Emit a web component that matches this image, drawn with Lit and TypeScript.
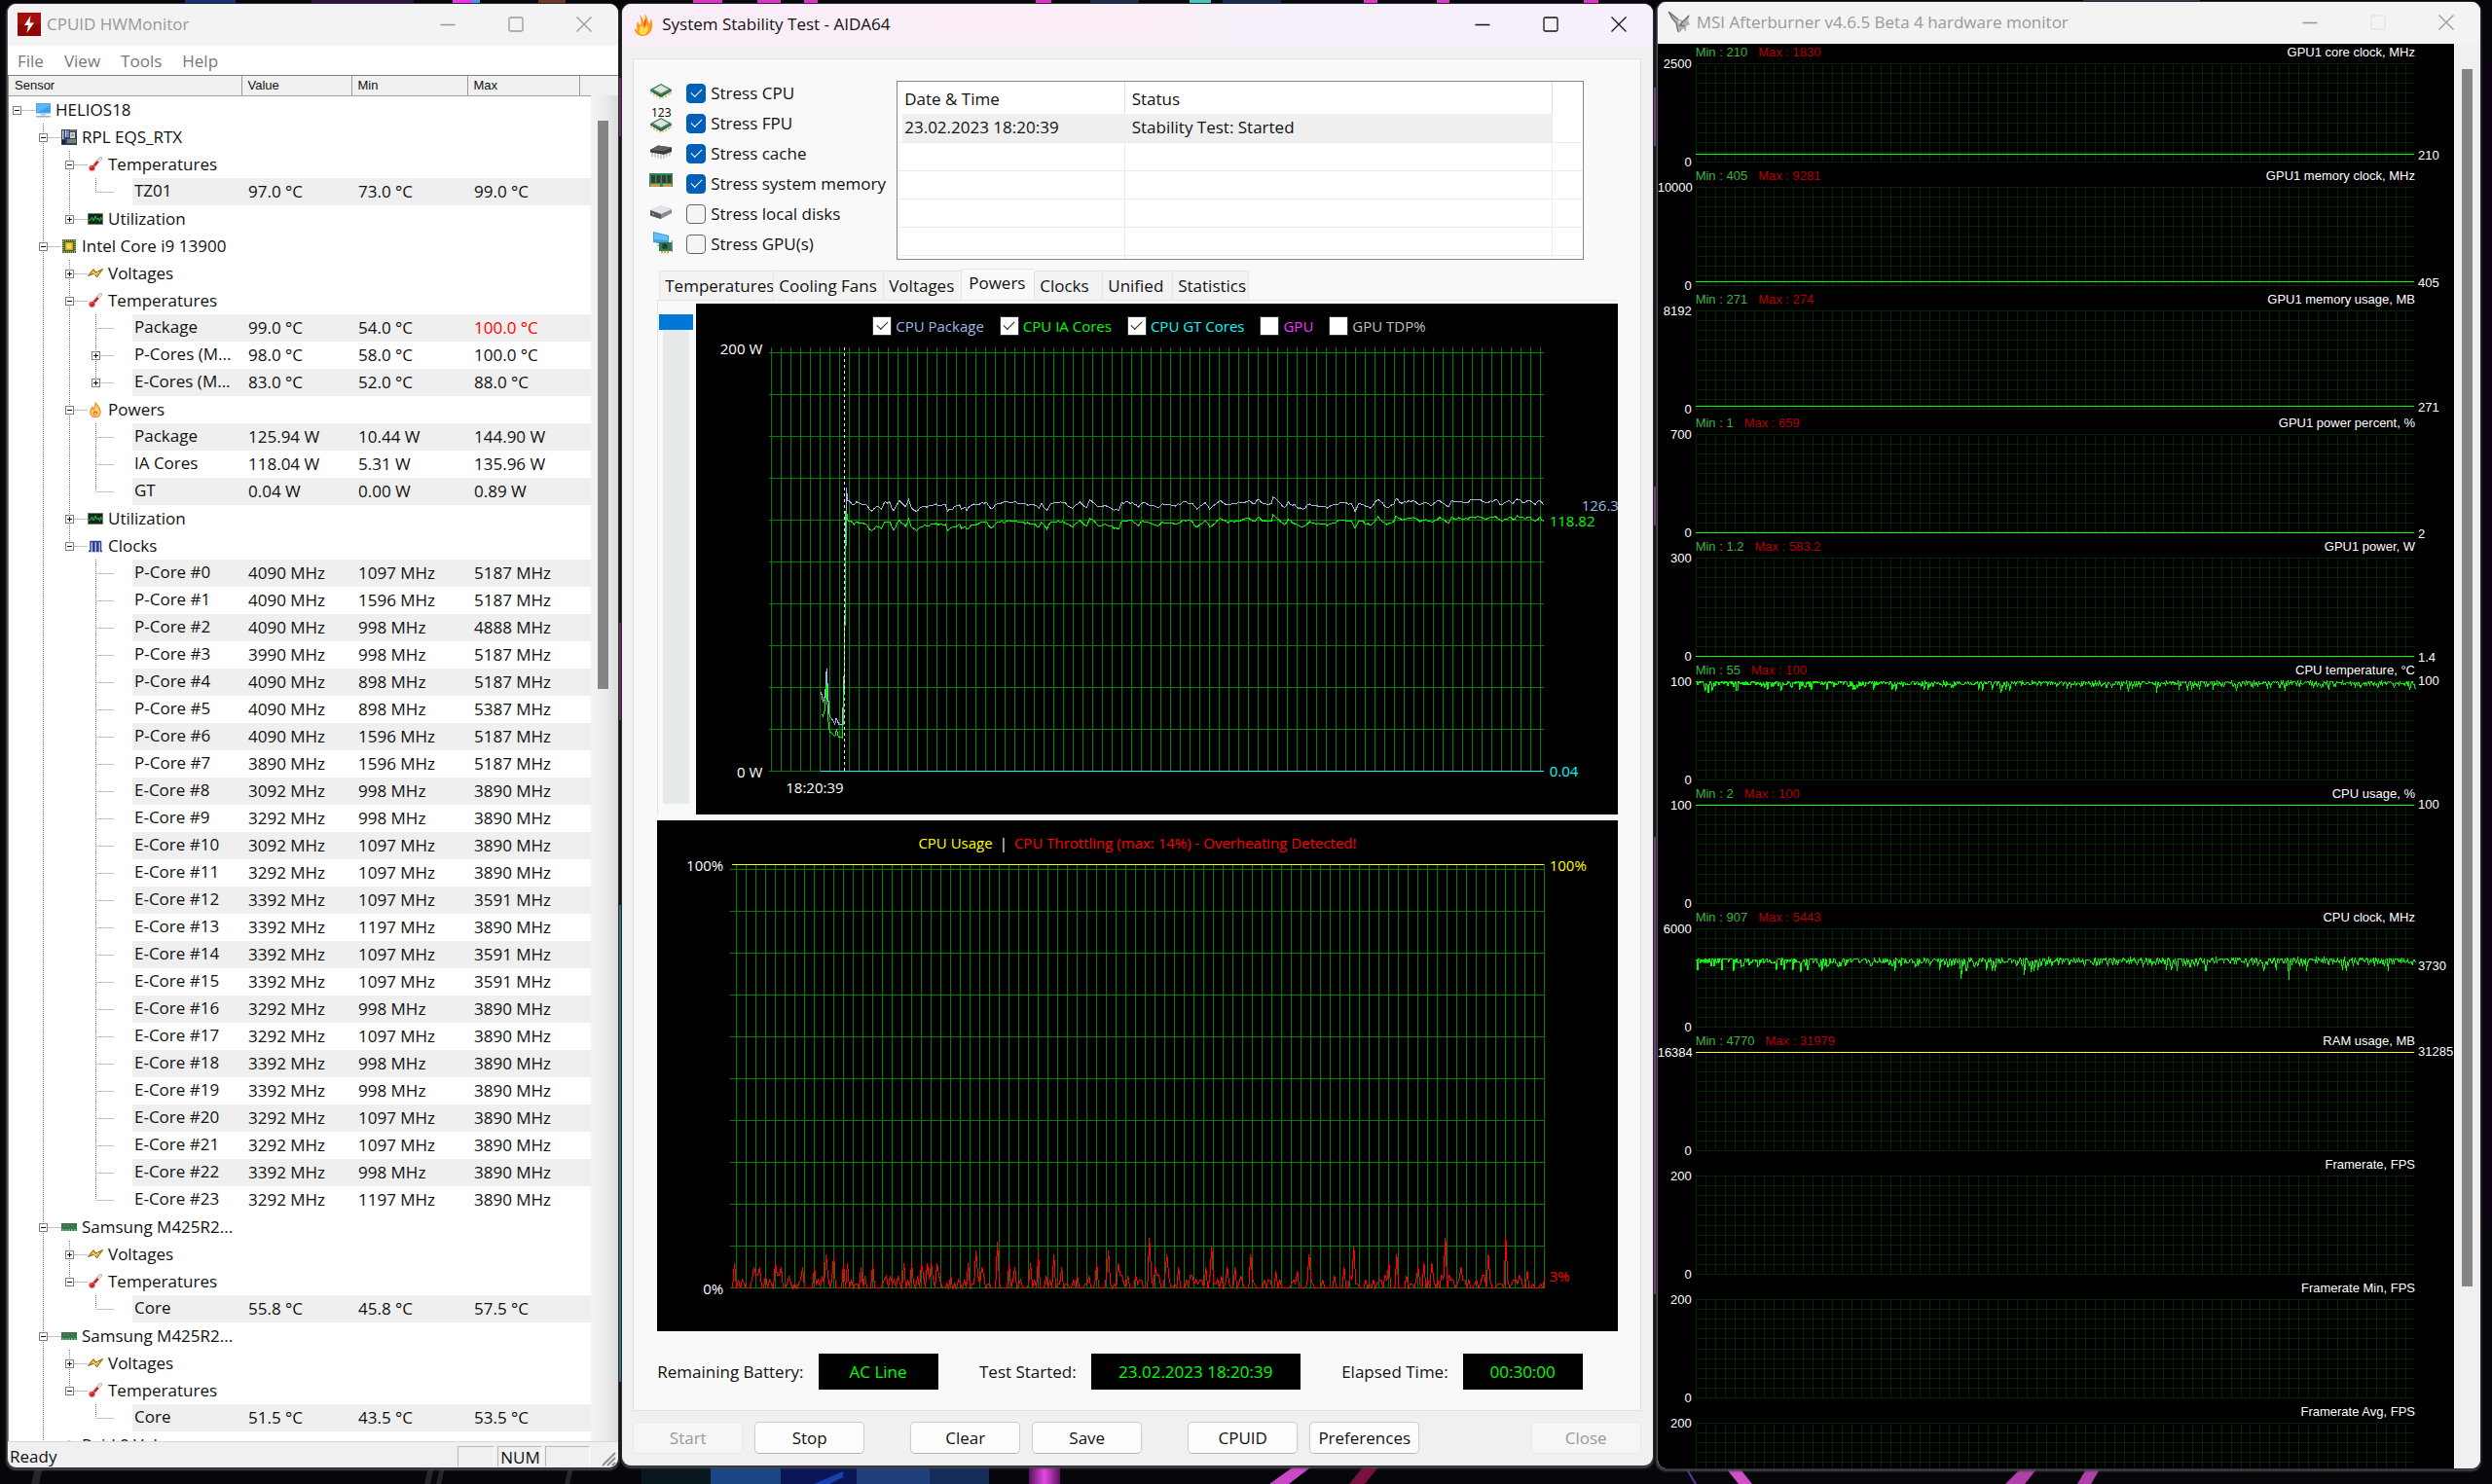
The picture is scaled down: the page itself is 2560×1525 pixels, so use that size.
import { LitElement, html, svg, css, nothing, TemplateResult } from "lit";
import { customElement, property } from "lit/decorators.js";
import { classMap } from "lit/directives/class-map.js";
import { styleMap } from "lit/directives/style-map.js";

/* ---------- shared helpers ---------- */

type Pt = [number, number];

/** Small deterministic generator so that every render draws the same trace. */
function makeRandom(seed: number): () => number {
  let s = seed;
  return () => {
    s = (s * 1664525 + 1013904223) % 4294967296;
    return s / 4294967296;
  };
}

const toPath = (pts: Pt[]) => pts.map(([x, y], i) => `${i ? "L" : "M"}${x.toFixed(1)} ${y.toFixed(1)}`).join("");

function gridPath(w: number, h: number, x0: number, dx: number, y0: number, dy: number): string {
  let d = "";
  for (let x = x0; x < w; x += dx) d += `M${x} 0V${h}`;
  for (let y = y0; y <= h; y += dy) d += `M0 ${Math.floor(y) + 0.5}H${w}`;
  return d;
}

const base = css`
  * { box-sizing: border-box; }
  :host { display: flex; flex-direction: column; min-width: 0; min-height: 0; font: 17px/24px "Open Sans", "Noto Sans", sans-serif; color: #111; }
  button { font: inherit; color: inherit; }
  svg { display: block; }
  .plot { width: 100%; height: 100%; overflow: visible; }
  .plot path { fill: none; vector-effect: non-scaling-stroke; stroke-width: 1; }
`;

/* ---------- icons ---------- */

const chipArt = svg`
  <path d="M1 9 12 14.500 23 9V10.500L12 17 1 10.500Z" fill="#1f5a3c"/>
  <path d="M2 11.500v2M5 13v2.500M8 14.500v2.500M11 16v2.500M14 16v2M17 14.500v2.500M20 12.500v2.500M22 11.500v2" stroke="#c9a24a" stroke-width="1.200"/>
  <path d="M12 3 23 9 12 14.500 1 9Z" fill="#2f7a52"/>
  <path d="M12 4.200 20 8.700 12 13 4 8.700Z" fill="#dfe3e0"/>`;

const icons: Record<string, TemplateResult> = {
  pc: svg`<rect x="1" y="1" width="15" height="10.500" rx=".5" fill="#4da6e8"/><rect x="2" y="2" width="13" height="8.500" fill="#58b9f5"/><path d="M2 10.500 15 4v6.500Z" fill="#3d9fe6"/><path d="M6 12h5v1.500H6Z" fill="#a9c6d8"/><path d="M1 14h15v1.500H1Z" fill="#8fb4c9"/>`,
  board: svg`<rect width="16" height="16" fill="#2c3f6e"/><path d="M1 1h1.500v9H1zM4 1h1.500v7H4zM6.500 1h1v7h-1z" fill="#c6cfe4"/><rect x="9" y="3" width="5" height="6" fill="#d8d2bd"/><rect x="10.500" y="4.500" width="2" height="2.500" fill="#8d8a77"/><path d="M6 11h9M6 13h9" stroke="#d2c05a" stroke-width="1.200"/><rect x="1" y="11" width="3" height="4" fill="#17213f"/><path d="M9 1h6" stroke="#b6a65c"/>`,
  temp: svg`<path d="M7 9 13.500 1.500" stroke="#b9bcc0" stroke-width="3.600" stroke-linecap="round"/><path d="M7 9 13.500 1.500" stroke="#e9eaec" stroke-width="1.600" stroke-linecap="round"/><path d="M5 11.500 10 5.500" stroke="#d3141a" stroke-width="2.200" stroke-linecap="round"/><circle cx="4.500" cy="12" r="3.600" fill="#c9cbd0"/><circle cx="4.500" cy="11.600" r="2.700" fill="#e0161c"/><circle cx="3.700" cy="10.800" r=".8" fill="#ff9a9a"/>`,
  util: svg`<rect y="2" width="16" height="12" fill="#8b8f8d"/><rect x=".8" y="2.800" width="14.400" height="10.400" fill="#10281a"/><path d="M1 10 3 9 4.500 6 6 10 8 5 9.500 9 11 7 12.500 10.500 13.500 6 15 9" fill="none" stroke="#2fb84c"/>`,
  cpu: svg`<rect x="1" y="1" width="14" height="14" fill="#2c6b3a"/><rect x="2" y="2" width="12" height="12" fill="none" stroke="#d9b73c" stroke-dasharray="1 1" stroke-width="1.400"/><rect x="4" y="4" width="8" height="8" fill="#e0a21a"/><rect x="5.500" y="5.500" width="5" height="5" fill="#ffd74f"/>`,
  volt: svg`<path d="M.5 10.500 6 3.500 8.500 7 15.500 3.500 9.500 12 7 8Z" fill="#f0b81c" stroke="#6d4a10" stroke-width=".9" stroke-linejoin="round"/><path d="M5 6 8 9 11 6.500" fill="none" stroke="#ffe58a"/>`,
  fire: svg`<path d="M8 .5C9 3 13.500 6 13 11c-.3 3-2.500 4.700-5 4.700S3 14 2.800 11C2.600 8.500 4 7.500 4.500 5.500 5.500 6.500 6 7.500 6.200 8 7.500 6 8.300 3.500 8 .5Z" fill="#ffcf7a" stroke="#f08a1c" stroke-width="1.200"/><circle cx="8" cy="11.500" r="2.200" fill="#e86f10"/><circle cx="8" cy="12" r=".9" fill="#fff0c8"/>`,
  clock: svg`<path d="M1 13.500H3V3.500H5.500V13.500H7V3.500H9.500V13.500H11V3.500H13.500V13.500H15" fill="none" stroke="#2b3fa0" stroke-width="1.500"/>`,
  ram: svg`<rect y="4" width="16" height="8" fill="#2a7a4a"/><path d="M1.500 5.500h3v3h-3zM5.500 5.500h3v3h-3zM9.500 5.500h3v3h-3z" fill="#56705f"/><path d="M1 11h14" stroke="#c7d8a8" stroke-dasharray="2 1" stroke-width="1.200"/>`,
  raid: svg`<path d="M1 6 8 3l7 3v5l-7 3-7-3Z" fill="#b9bcc0"/>`,
};

const icon = (name: string) => html`<svg class="icon" width="16" height="16" viewBox="0 0 16 16" aria-hidden="true">${icons[name]}</svg>`;

const stressIcons: Record<string, TemplateResult> = {
  chip: chipArt,
  fpu: svg`<text x="2" y="6">123</text><g transform="translate(0 4)">${chipArt}</g>`,
  cache: svg`<path d="M1 9 9 4.500 23 6.500V11L15 14 1 11.500Z" fill="#3b3b3d"/><path d="M1 9 9 4.500 23 6.500 15 10.500Z" fill="#5e5f62"/><path d="M3 12v4M6 12.500v4M9 13v4.500M12 13.500v5M15 13.500v4M18 12.500v3.500M21 11.500v4" stroke="#a7a9ad" stroke-width="1.100"/>`,
  mem: svg`<rect y="2" width="24" height="14" fill="#2f8a58"/><path d="M2 4h4v8H2zM7.500 4h4v8h-4zM13 4h4v8h-4zM18.500 4h4v8h-4z" fill="#333d38"/><path d="M1 14.500h10M14 14.500h9" stroke="#c99a4a" stroke-width="3"/>`,
  disk: svg`<path d="M1 9 12 4.500 23 8v4L12 18 1 14.500Z" fill="#8a8b8e"/><path d="M1 9 12 4.500 23 8 12 13Z" fill="#e4e5e8"/><path d="M1 9 12 13v5L1 14.500Z" fill="#55575a"/><circle cx="4" cy="13" r="1" fill="#4fd06a"/>`,
  gpu: svg`<path d="M4 0 20 4V14L4 11Z" fill="#3d9fe6"/><path d="M5 1.500 19 5v4L5 8Z" fill="#6cc0f7"/><path d="M8 14 18 16" stroke="#9ec4de" stroke-width="2"/><rect x="10" y="11" width="13" height="9" fill="#2f7a52"/><rect x="13.500" y="12.500" width="5" height="5" fill="#1f3a2c"/><path d="M12 21h9" stroke="#d8a83a" stroke-width="2.400" stroke-dasharray="2 1"/><path d="M23.500 9v12" stroke="#8a8b8e"/>`,
};

/* ---------- window frame ---------- */

@customElement("window-frame")
export class WindowFrame extends LitElement {
  @property() heading = "";
  @property({ type: Boolean, reflect: true }) active = false;
  @property({ type: Boolean }) fixed = false;
  static styles = [base, css`
    :host { flex: 1; border: 1px solid #55555a; border-width: 0 0 0 1px; border-radius: 9px; overflow: hidden; background: #f0f0f0; box-shadow: 0 0 0 1px #2c2c30, 0 2px 2px 1px #454549; }
    .bar { display: flex; align-items: center; height: 43px; padding: 0 0 2px 10px; background: #f3f3f3; color: #999; flex: none; }
    :host([active]) { border-left-color: #f0f0f0; }
    :host([active]) .bar { background: linear-gradient(90deg, #f8eef8, #fbedf6 50%, #f5f0f9 60%); color: #111; }
    .name { flex: 1; margin: 0; padding-left: 6px; font-size: 17px; font-weight: 400; white-space: nowrap; }
    .ctl { width: 70px; height: 41px; padding: 0; border: 0; background: none; display: grid; place-items: center; }
    .ctl path { fill: none; stroke: currentColor; stroke-width: 1.300; }
    .off { color: #e3e3e3; }
  `];
  render() {
    return html`
      <header class="bar">
        <slot name="icon"></slot>
        <h1 class="name">${this.heading}</h1>
        <button class="ctl" aria-label="Minimize"><svg width="16" height="16"><path d="M.5 8.500H15.500"/></svg></button>
        <button class=${classMap({ ctl: true, off: this.fixed })} aria-label="Maximize" ?disabled=${this.fixed}><svg width="16" height="16"><path d="M2.500 1H13.500Q15 1 15 2.500V13.500Q15 15 13.500 15H2.500Q1 15 1 13.500V2.500Q1 1 2.500 1Z"/></svg></button>
        <button class="ctl" aria-label="Close window"><svg width="16" height="16"><path d="M.5.5 15.500 15.500M15.500.5.5 15.500"/></svg></button>
      </header>
      <slot></slot>`;
  }
}

/* ---------- CPUID HWMonitor ---------- */

interface Node { label: string; level: number; icon?: string; box?: "+" | "-"; values?: string[]; hot?: boolean; shade?: boolean; }

const node = (level: number, label: string, ic: string, box: "+" | "-" = "-"): Node => ({ level, label, icon: ic, box });
const leaves = (rows: string[]): Node[] =>
  rows.map((r, i) => {
    const [label, ...values] = r.split("|");
    return { level: 3, label, values, shade: i % 2 === 0, hot: false };
  });
const clocks = [
  "4090|1097|5187", "4090|1596|5187", "4090|998|4888", "3990|998|5187", "4090|898|5187", "4090|898|5387", "4090|1596|5187", "3890|1596|5187",
  "3092|998|3890", "3292|998|3890", "3092|1097|3890", "3292|1097|3890", "3392|1097|3591", "3392|1197|3890", "3392|1097|3591", "3392|1097|3591",
  "3292|998|3890", "3292|1097|3890", "3392|998|3890", "3392|998|3890", "3292|1097|3890", "3292|1097|3890", "3392|998|3890", "3292|1197|3890",
].map((c, i) => `${i < 8 ? "P" : "E"}-Core #${i}|${c.split("|").map((v) => v + " MHz").join("|")}`);

const cpuTemps = leaves(["Package|99.0 °C|54.0 °C|100.0 °C", "P-Cores (M...|98.0 °C|58.0 °C|100.0 °C", "E-Cores (M...|83.0 °C|52.0 °C|88.0 °C"]);
cpuTemps[0].hot = true;
cpuTemps[1].box = "+";
cpuTemps[2].box = "+";

const tree: Node[] = [
  node(0, "HELIOS18", "pc"),
  node(1, "RPL EQS_RTX", "board"),
  node(2, "Temperatures", "temp"),
  ...leaves(["TZ01|97.0 °C|73.0 °C|99.0 °C"]),
  node(2, "Utilization", "util", "+"),
  node(1, "Intel Core i9 13900", "cpu"),
  node(2, "Voltages", "volt", "+"),
  node(2, "Temperatures", "temp"),
  ...cpuTemps,
  node(2, "Powers", "fire"),
  ...leaves(["Package|125.94 W|10.44 W|144.90 W", "IA Cores|118.04 W|5.31 W|135.96 W", "GT|0.04 W|0.00 W|0.89 W"]),
  node(2, "Utilization", "util", "+"),
  node(2, "Clocks", "clock"),
  ...leaves(clocks),
  node(1, "Samsung M425R2...", "ram"),
  node(2, "Voltages", "volt", "+"),
  node(2, "Temperatures", "temp"),
  ...leaves(["Core|55.8 °C|45.8 °C|57.5 °C"]),
  node(1, "Samsung M425R2...", "ram"),
  node(2, "Voltages", "volt", "+"),
  node(2, "Temperatures", "temp"),
  ...leaves(["Core|51.5 °C|43.5 °C|53.5 °C"]),
  node(1, "Raid 0 Volu...", "raid"),
];

/** True when a later row continues the branch at the given level. */
function continues(index: number, level: number): boolean {
  for (let i = index + 1; i < tree.length; i++) {
    if (tree[i].level < level) return false;
    if (tree[i].level === level) return true;
  }
  return level === 1;
}

function guides(index: number) {
  const n = tree[index];
  const leaf = !n.icon;
  const width = leaf ? 127 : 27 + 27 * n.level;
  const cx = 8.5 + 27 * n.level;
  let d = `M${cx} 14.500H${leaf ? 108 : width}`;
  for (let l = 1; l <= n.level; l++) {
    const x = 8.5 + 27 * l;
    if (continues(index, l)) d += `M${x} 0V28`;
    else if (l === n.level) d += `M${x} 0V14`;
  }
  return html`<svg class="guide" width=${width} height="28" aria-hidden="true">
    <path class="dots" d=${d}></path>
    ${n.box ? svg`<rect x=${cx - 4} y="10.500" width="8" height="8" fill="#fff" stroke="#808080"/>
      <path d=${`M${cx - 2.5} 14.500h5` + (n.box === "+" ? `M${cx} 12v5` : "")} stroke="#111"/>` : nothing}
  </svg>`;
}

@customElement("hw-monitor")
export class HwMonitor extends LitElement {
  static styles = [base, css`
    .menu { display: flex; gap: 21px; height: 30px; padding: 2px 0 0 10px; background: #fff; color: #777; font-size: 17px; flex: none; }
    .menu button { border: 0; padding: 0; background: none; }
    .list { position: relative; flex: 1; min-height: 0; overflow: hidden; background: #fff; border: 1px solid #828282; border-width: 1px 0 0 1px; }
    table { width: 100%; table-layout: fixed; border-collapse: collapse; }
    .c1 { width: 239px; } .c2 { width: 113px; } .c3 { width: 119px; } .c4 { width: 115px; }
    th { height: 20px; padding: 0 0 0 6px; text-align: left; font: 13px/18px "Liberation Sans", Arial, sans-serif; background: #f0f0f0; border-right: 1px solid #999; border-bottom: 1px solid #a0a0a0; }
    th:last-child { border-right: 0; }
    td { height: 28px; padding: 0 0 0 7px; line-height: 26px; white-space: nowrap; }
    td.s { padding: 0; }
    .shade td:not(.s), .shade .leaf { background: #efefef; }
    .cell { display: flex; align-items: center; height: 28px; }
    .guide { flex: none; }
    .dots { stroke: #808080; stroke-dasharray: 1 1; fill: none; }
    .icon { flex: none; margin-right: 5px; }
    .leaf { flex: 1; height: 28px; padding-left: 2px; }
    .hot { color: #f00; }
    .scroll { position: absolute; top: 20px; right: 0; bottom: 0; width: 28px; background: linear-gradient(90deg, #f3f3f3, #ededed 50%, #dadada); display: flex; flex-direction: column; padding: 26px 11px 0 7px; }
    .thumb { width: 11px; height: 43%; background: #858585; }
    .status { display: flex; align-items: stretch; gap: 3px; height: 27px; padding: 4px 2px 1px 2px; border-top: 1px solid #d8d8d8; flex: none; }
    .ready { flex: 1; line-height: 22px; }
    .box { width: 38px; line-height: 22px; border: 1px solid #b8b8b8; border-right-color: #fff; border-bottom: 0; padding-left: 2px; }
    .wide { width: 46px; }
    .grip { align-self: flex-end; margin-left: 8px; }
  `];
  render() {
    return html`
      <nav class="menu">${["File", "View", "Tools", "Help"].map((m) => html`<button>${m}</button>`)}</nav>
      <div class="list">
        <table>
          <colgroup><col class="c1"><col class="c2"><col class="c3"><col class="c4"><col></colgroup>
          <thead><tr><th>Sensor</th><th>Value</th><th>Min</th><th>Max</th><th></th></tr></thead>
          <tbody>
            ${tree.map((n, i) => html`<tr class=${n.shade ? "shade" : ""}>
              <td class="s"><div class="cell">${guides(i)}${n.icon ? html`${icon(n.icon)}${n.label}` : html`<span class="leaf">${n.label}</span>`}</div></td>
              ${[0, 1, 2].map((k) => html`<td class=${n.hot && k === 2 ? "hot" : ""}>${n.values?.[k] ?? ""}</td>`)}
              <td></td>
            </tr>`)}
          </tbody>
        </table>
        <div class="scroll"><div class="thumb"></div></div>
      </div>
      <footer class="status">
        <span class="ready">Ready</span>
        <span class="box"></span><span class="box wide">NUM</span><span class="box wide"></span>
        <svg class="grip" width="16" height="16" aria-hidden="true"><path d="M2 15 15 2M7 15 15 7M12 15 15 12" stroke="#909090" stroke-width="2"></path></svg>
      </footer>`;
  }
}

/* ---------- AIDA64 System Stability Test ---------- */

const early: Pt[] = [[452, 1150], [457, 1180], [462, 1160], [466, 1082], [470, 1170], [473, 1220], [480, 1230], [487, 1243], [490, 1225], [497, 1245], [505, 1245], [508, 1178], [511, 1040], [513, 800], [515, 563]];
const steady: Pt[] = [
  [519, 600], [535, 612], [541, 604], [561, 610], [580, 630], [591, 618], [604, 625], [613, 604], [624, 604], [634, 629], [649, 600], [665, 618], [672, 597], [679, 620], [692, 631], [701, 620],
  [735, 613], [765, 613], [770, 630], [800, 612], [805, 625], [815, 620], [818, 628], [830, 614], [862, 608], [868, 606], [880, 624], [890, 612], [918, 604], [960, 608], [990, 614], [1000, 622],
  [1006, 608], [1020, 628], [1030, 608], [1060, 606], [1085, 622], [1103, 604], [1120, 620], [1128, 598], [1148, 618], [1165, 614], [1201, 629], [1208, 606], [1235, 605], [1250, 620], [1262, 606],
  [1300, 620], [1310, 610], [1323, 612], [1343, 616], [1363, 604], [1385, 608], [1398, 625], [1418, 606], [1430, 625], [1456, 600], [1475, 612], [1508, 606], [1528, 600], [1543, 610], [1553, 596],
  [1563, 608], [1585, 608], [1589, 590], [1603, 604], [1618, 620], [1627, 604], [1648, 618], [1663, 625], [1681, 610], [1703, 616], [1726, 622], [1763, 606], [1785, 608], [1795, 631], [1805, 608],
  [1833, 622], [1853, 597], [1875, 620], [1893, 610], [1898, 595], [1913, 608], [1941, 600], [1958, 612], [1973, 606], [1988, 614], [2008, 600], [2030, 618], [2038, 600], [2068, 606], [2103, 597],
  [2123, 606], [2148, 598], [2165, 612], [2183, 600], [2193, 608], [2203, 596], [2223, 606], [2235, 600], [2248, 612], [2260, 600], [2270, 612],
];
const px = ([x, y]: Pt): Pt => [x / 2.45 - 131, y / 2.8 - 57];

function densify(keys: Pt[], shift: (t: number) => number, seed: number): Pt[] {
  const rnd = makeRandom(seed);
  const out: Pt[] = [];
  const last = keys[keys.length - 1][0];
  keys.forEach((p, i) => {
    const q = keys[i + 1];
    const steps = q ? Math.max(1, Math.round((q[0] - p[0]) / 6)) : 1;
    for (let k = 0; k < steps; k++) {
      const f = k / steps;
      const x = q ? p[0] + (q[0] - p[0]) * f : p[0];
      const y = q ? p[1] + (q[1] - p[1]) * f : p[1];
      out.push(px([x, y + shift(x / last) + (k ? (rnd() - 0.5) * 7 : 0)]));
    }
  });
  return out;
}
const packageTrace = toPath([...early.map(px), ...densify(steady, () => 0, 7)]);
const coreTrace = toPath([
  ...([[453, 1215], [457, 1220], [461, 1205], [466, 1125], [469, 1220], [472, 1258], [475, 1266], [487, 1278], [491, 1258], [496, 1280], [506, 1282], [509, 1180], [511, 1046], [514, 760], [516, 628]] as Pt[]).map(px),
  ...densify(steady, (t) => 60 - 13 * t, 19),
]);

/* Throttling peaks: x and percentage. */
const peaks: Pt[] = [
  [3, 6], [24, 5], [29, 5], [45, 6], [51, 5], [73, 5], [85, 5], [97, 8], [105, 8], [116, 6], [120, 6], [133, 5], [145, 6], [177, 6], [185, 6], [196, 6], [201, 6], [205, 6], [211, 6], [243, 6], [251, 9], [258, 5],
  [273, 11], [285, 6], [292, 5], [307, 6], [315, 8], [332, 8], [339, 5], [376, 6], [387, 9], [397, 6], [429, 12], [436, 5], [447, 8], [459, 5], [487, 5], [493, 10], [510, 5], [517, 5],
  [533, 8], [559, 4], [581, 4], [593, 8], [630, 5], [639, 10], [675, 6], [684, 8], [705, 5], [711, 6], [719, 6], [733, 12], [749, 5], [778, 8], [796, 12], [818, 4], [836, 3],
];

const throttleTrace = (() => {
  const rnd = makeRandom(31);
  const at = new Map<number, number>();
  peaks.forEach(([x, v]) => at.set(Math.round(x / 2) * 2, v));
  const pts: Pt[] = [];
  for (let x = 0; x <= 836; x += 2) {
    const level = at.get(x) ?? Math.max(0, Math.floor(rnd() * 5.6) - 2);
    pts.push([x + 0.5, 435.5 - level * 4.3]);
  }
  return toPath(pts);
})();

const stress: [string, string, boolean][] = [
  ["chip", "Stress CPU", true], ["fpu", "Stress FPU", true], ["cache", "Stress cache", true],
  ["mem", "Stress system memory", true], ["disk", "Stress local disks", false], ["gpu", "Stress GPU(s)", false],
];
const legend: [string, string, boolean][] = [
  ["CPU Package", "pkg", true], ["CPU IA Cores", "ia", true], ["CPU GT Cores", "gt", true], ["GPU", "gpu", false], ["GPU TDP%", "tdp", false],
];

@customElement("aida-stability")
export class AidaStability extends LitElement {
  static styles = [base, css`
    :host { padding: 13px 12px 12px 10px; }
    .group { flex: 1; min-height: 0; display: flex; flex-direction: column; border: 1px solid #e2e2e2; background: #f9f9f9; padding: 19px 23px 21px 24px; }
    .top { display: flex; align-items: flex-start; padding-right: 35px; }
    .checks { width: 254px; display: grid; grid-auto-rows: 31px; margin-left: -8px; flex: none; }
    .check { display: flex; align-items: center; white-space: nowrap; }
    .pic { width: 24px; height: 22px; margin: 0 14px 4px 0; overflow: visible; flex: none; }
    .pic text { font: 12px "Open Sans", sans-serif; }
    input[type="checkbox"] { appearance: none; width: 20px; height: 20px; margin: 0 5px 0 0; border: 1px solid #666; border-radius: 4px; background: #f5f5f5 no-repeat center; display: grid; place-items: center; flex: none; }
    .check input:checked { background: #005fb8; border-color: #005fb8; }
    input:checked::after { content: ""; width: 10px; height: 5px; border: solid #fff; border-width: 0 0 1px 1px; transform: translateY(-2px) rotate(-45deg); }
    .log { flex: 1; height: 184px; margin-top: 3px; border: 1px solid #828790; background: #fff; overflow: hidden; }
    table { width: 100%; table-layout: fixed; border-collapse: collapse; }
    .d { width: 233px; } .e { width: 31px; }
    th { height: 33px; font-weight: 400; text-align: left; padding: 2px 0 0 7px; border-right: 1px solid #e0e0e0; }
    th:last-child, td:last-child { border-right: 0; }
    td { height: 29px; padding: 0 0 0 7px; border-right: 1px solid #ececec; border-bottom: 1px solid #ececec; white-space: nowrap; line-height: 24px; }
    .sel td:not(:last-child) { background: #efefef; border-right-color: #efefef; }
    .sel td:first-child { box-shadow: inset 5px 0 #fff; }
    .tabs { display: flex; align-items: flex-end; height: 32px; margin-top: 9px; padding-left: 2px; }
    .tab { height: 30px; padding: 0 0 0 5px; border: 1px solid #e5e5e5; border-bottom: 0; border-right: 0; background: #f3f3f3; white-space: nowrap; text-align: left; flex: none; }
    .tab:last-child { border-right: 1px solid #e5e5e5; }
    .tab.on { height: 32px; padding: 0 0 4px 7px; background: #f9f9f9; }
    .w1 { width: 117px; } .w2 { width: 113px; } .w3 { width: 80px; } .w4 { width: 75px; } .w5 { width: 70px; } .w6 { width: 72px; } .w7 { width: 79px; }
    .pane { flex: 1; min-height: 0; display: flex; border: 1px solid #e5e5e5; border-right: 0; border-bottom: 0; padding-top: 3px; }
    input[type="range"] { appearance: none; writing-mode: vertical-lr; width: 35px; height: auto; margin: 11px 3px 11px 1px; background: linear-gradient(#e6eaea, #e6eaea) center / 27px 100% no-repeat; flex: none; }
    input[type="range"]::-webkit-slider-thumb { appearance: none; width: 35px; height: 16px; background: #0078d7; }
    .chart { flex: 1; min-width: 0; min-height: 0; display: grid; grid-template: 45px 1fr 43px / 75px 1fr 75px; background: #000; color: #fff; font-size: 15px; line-height: 20px; overflow: hidden; }
    .usage { margin-top: 6px; }
    .legend { grid-column: 1 / -1; display: flex; justify-content: center; align-items: center; gap: 16px; padding-right: 16px; white-space: nowrap; }
    .key { display: flex; align-items: center; }
    .legend input[type="checkbox"] { background: #fff; border: 1px solid #333; border-radius: 0; margin-right: 4px; }
    .legend input:checked::after { border-color: #222; }
    .title { gap: 7px; padding: 0; }
    .axis { display: flex; flex-direction: column; justify-content: space-between; text-align: right; margin: -9px 0; padding-right: 7px; }
    .grid { stroke: #008000; shape-rendering: crispEdges; }
    .line { shape-rendering: crispEdges; }
    .marks { position: relative; }
    .mark { position: absolute; left: 5px; margin-top: -11px; }
    .mark.far { left: 38px; }
    .foot { grid-column: 1 / -1; padding: 5px 0 0 92px; }
    .pkg { color: #9db8e6; stroke: #9db8e6; } .ia { color: #00ff00; stroke: #00ff00; } .gt { color: #00ffff; stroke: #00ffff; }
    .gpu { color: #ff33ff; } .tdp { color: #b4c8b0; } .yel { color: #ffff00; stroke: #ffff00; } .red { color: #ff0000; stroke: #ff0000; }
    .start { stroke: #fff; stroke-dasharray: 3 3; shape-rendering: crispEdges; }
    .info { display: flex; align-items: center; height: 37px; margin-top: 23px; padding-right: 36px; white-space: nowrap; justify-content: space-between; }
    .info dl { display: flex; align-items: center; gap: 15px; margin: 0; }
    .info dd { margin: 0; height: 37px; line-height: 37px; width: 123px; text-align: center; background: #000; color: #00ff00; }
    .info .long { width: 215px; }
    .actions { display: flex; gap: 12px; padding-top: 11px; height: 44px; }
    .act { width: 113px; padding: 0; border: 1px solid #ccc; border-bottom-color: #b5b5b5; border-radius: 5px; background: #fdfdfd; flex: none; }
    .act:disabled { color: #999; border-color: #e8e8e8; background: #f6f6f6; }
    .gap { width: 23px; } .fill { flex: 1; }
  `];
  render() {
    const tabs = ["Temperatures", "Cooling Fans", "Voltages", "Powers", "Clocks", "Unified", "Statistics"];
    return html`
      <section class="group">
        <div class="top">
          <div class="checks">
            ${stress.map(([ic, label, on]) => html`<label class="check">
              <svg class="pic" viewBox="0 0 24 22" aria-hidden="true">${stressIcons[ic]}</svg>
              <input type="checkbox" ?checked=${on}>${label}</label>`)}
          </div>
          <div class="log">
            <table>
              <colgroup><col class="d"><col><col class="e"></colgroup>
              <thead><tr><th>Date &amp; Time</th><th>Status</th><th></th></tr></thead>
              <tbody>
                <tr class="sel"><td>23.02.2023 18:20:39</td><td>Stability Test: Started</td><td></td></tr>
                ${[0, 1, 2, 3, 4].map(() => html`<tr><td></td><td></td><td></td></tr>`)}
              </tbody>
            </table>
          </div>
        </div>
        <div class="tabs" role="tablist">
          ${tabs.map((t, i) => html`<button role="tab" aria-selected=${t === "Powers"} class="tab w${i + 1} ${t === "Powers" ? "on" : ""}">${t}</button>`)}
        </div>
        <div class="pane">
          <input type="range" aria-label="Chart scale" min="0" max="100" value="0">
          <div class="chart">
            <div class="legend">
              ${legend.map(([label, cls, on]) => html`<label class="key ${cls}"><input type="checkbox" ?checked=${on}>${label}</label>`)}
            </div>
            <div class="axis"><span>200 W</span><span>0 W</span></div>
            <svg class="plot" viewBox="0 0 796 437" preserveAspectRatio="none" role="img" aria-label="Power chart">
              <path class="grid" d=${gridPath(796, 436, 2.5, 10, 5.5, 43)}></path>
              <path class="line pkg" d=${packageTrace}></path>
              <path class="line ia" d=${coreTrace}></path>
              <path class="line gt" d="M53 435.500H796"></path>
              <path class="start" d="M77.500 0V436"></path>
            </svg>
            <div class="marks">
              <span class="mark far pkg" style=${styleMap({ top: "37.3%" })}>126.3</span>
              <span class="mark ia" style=${styleMap({ top: "40.9%" })}>118.82</span>
              <span class="mark gt" style=${styleMap({ top: "99.8%" })}>0.04</span>
            </div>
            <div class="foot">18:20:39</div>
          </div>
        </div>
        <div class="chart usage">
          <div class="legend title"><span class="yel">CPU Usage</span><span>|</span><span class="red">CPU Throttling (max: 14%) - Overheating Detected!</span></div>
          <div class="axis"><span>100%</span><span>0%</span></div>
          <svg class="plot" viewBox="0 0 836 437" preserveAspectRatio="none" role="img" aria-label="CPU usage chart">
            <path class="grid" d=${gridPath(837, 436, 6.5, 10, 5.5, 43)}></path>
            <path class="line red" d=${throttleTrace}></path>
            <path class="line yel" d="M2 .5H836"></path>
          </svg>
          <div class="marks">
            <span class="mark yel" style=${styleMap({ top: "0.5%" })}>100%</span>
            <span class="mark red" style=${styleMap({ top: "97%" })}>3%</span>
          </div>
        </div>
        <div class="info">
          <dl><dt>Remaining Battery:</dt><dd>AC Line</dd></dl>
          <dl><dt>Test Started:</dt><dd class="long">23.02.2023 18:20:39</dd></dl>
          <dl><dt>Elapsed Time:</dt><dd>00:30:00</dd></dl>
        </div>
      </section>
      <div class="actions">
        <button class="act" disabled>Start</button><button class="act">Stop</button><span class="gap"></span>
        <button class="act">Clear</button><button class="act">Save</button><span class="gap"></span>
        <button class="act">CPUID</button><button class="act">Preferences</button><span class="fill"></span>
        <button class="act" disabled>Close</button>
      </div>`;
  }
}

/* ---------- MSI Afterburner hardware monitor ---------- */

interface Graph { title: string; top: string; min?: string; max?: string; now?: string; level?: number; trace?: string; warn?: boolean; }

function noisy(basis: number, depth: number, seed: number, dips: Pt[]): string {
  const rnd = makeRandom(seed);
  const pts: Pt[] = [];
  for (let x = 0; x <= 740; x += 1) {
    const r = rnd();
    const y = basis + (r > 0.97 ? depth : r > 0.85 ? depth * 0.6 : r > 0.5 ? depth * 0.28 : 0) + (rnd() > 0.5 ? 0 : 1);
    pts.push([x, y]);
  }
  dips.forEach(([x, y]) => (pts[x][1] = y));
  return toPath(pts);
}

const graphs: Graph[] = [
  { title: "GPU1 core clock, MHz", top: "2500", min: "210", max: "1830", now: "210", level: 93 },
  { title: "GPU1 memory clock, MHz", top: "10000", min: "405", max: "9281", now: "405", level: 97 },
  { title: "GPU1 memory usage, MB", top: "8192", min: "271", max: "274", now: "271", level: 98 },
  { title: "GPU1 power percent, %", top: "700", min: "1", max: "659", now: "2", level: 101 },
  { title: "GPU1 power, W", top: "300", min: "1.2", max: "583.2", now: "1.4", level: 101 },
  { title: "CPU temperature, °C", top: "100", min: "55", max: "100", now: "100", level: 0, trace: noisy(0.5, 8, 5, [[13, 12], [43, 10], [107, 9], [183, 9], [314, 12], [445, 11], [474, 12]]) },
  { title: "CPU usage, %", top: "100", min: "2", max: "100", now: "100", level: 0 },
  { title: "CPU clock, MHz", top: "6000", min: "907", max: "5443", now: "3730", level: 38, trace: noisy(31, 12, 11, [[2, 43], [27, 43], [108, 45], [273, 52], [299, 43], [338, 48], [345, 45], [610, 53], [628, 44]]) },
  { title: "RAM usage, MB", top: "16384", min: "4770", max: "31979", now: "31285", level: 0, warn: true },
  { title: "Framerate, FPS", top: "200" },
  { title: "Framerate Min, FPS", top: "200" },
  { title: "Framerate Avg, FPS", top: "200" },
];

@customElement("msi-monitor")
export class MsiMonitor extends LitElement {
  static styles = [base, css`
    :host { flex: 1; font: 13px/16px "Liberation Sans", Arial, sans-serif; }
    .view { flex: 1; min-height: 0; display: flex; background: #f0f0f0; }
    .graphs { flex: 1; min-width: 0; overflow: hidden; background: #000; color: #fff; border-right: 1px solid #fff; }
    .graph { display: grid; grid-template: 20px 102px / 39px 1fr 40px; height: 127px; }
    .head { grid-column: 2; display: flex; gap: 11px; padding-top: 1px; white-space: nowrap; }
    .min { color: #3cb43c; } .max { color: #b40000; }
    .head h2 { flex: 1; margin: 0; text-align: right; font-size: 13px; font-weight: 400; }
    .axis { grid-column: 1; display: flex; flex-direction: column; justify-content: space-between; text-align: right; margin: -7px 0 -8px; padding-right: 4px; }
    .cells { stroke: #002800; shape-rendering: crispEdges; }
    .data { stroke: #00ff00; shape-rendering: crispEdges; }
    .warn { stroke: #ffff00; }
    .marks { position: relative; }
    .mark { position: absolute; left: 3px; margin-top: -7px; }
    .rail { width: 26px; padding: 26px 8px 0 7px; }
    .thumb { width: 11px; height: 87%; background: #858585; }
  `];
  render() {
    return html`
      <div class="view">
        <div class="graphs">
          ${graphs.map((g) => html`<section class="graph">
            <div class="head">
              ${g.min ? html`<span class="min">Min : ${g.min}</span><span class="max">Max : ${g.max}</span>` : nothing}
              <h2>${g.title}</h2>
            </div>
            <div class="axis"><span>${g.top}</span><span>0</span></div>
            <svg class="plot" viewBox="0 0 740 102" preserveAspectRatio="none" role="img" aria-label=${g.title}>
              <path class="cells" d=${gridPath(740, 102, 0.5, 10, 0.5, 10.1)}></path>
              ${g.level === undefined ? nothing : svg`<path class=${classMap({ data: true, warn: !!g.warn })} d=${g.trace ?? `M0 ${g.level + 0.5}H739`}></path>`}
            </svg>
            <div class="marks">${g.now ? html`<span class="mark" style=${styleMap({ top: `${g.level! - 1}%` })}>${g.now}</span>` : nothing}</div>
          </section>`)}
        </div>
        <div class="rail"><div class="thumb"></div></div>
      </div>`;
  }
}

/* ---------- desktop ---------- */

@customElement("app-root")
export class AppRoot extends LitElement {
  static styles = css`
    * { box-sizing: border-box; }
    :host { display: block; }
    .desktop { position: relative; display: grid; grid-template-columns: 628fr 1058fr 846fr; gap: 4px; height: 100vh; padding: 2px 12px 16px 7px; background: #07060a; overflow: hidden; }
    .paper { position: absolute; inset: 0; width: 100%; height: 100%; }
    window-frame { position: relative; }
    .hw { margin: 2px 0 1px; }
    .aida { margin: 2px 0 3px; }
    hw-monitor, aida-stability, msi-monitor { flex: 1; }
    .logo { display: block; flex: none; }
  `;
  render() {
    return html`
      <main class="desktop">
        <svg class="paper" viewBox="0 0 2560 1525" preserveAspectRatio="none" aria-hidden="true">
          <defs><linearGradient id="neon"><stop offset="0" stop-color="#5a1060"/><stop offset=".5" stop-color="#e04ae0"/><stop offset="1" stop-color="#5a1060"/></linearGradient></defs>
          <path d="M190 0h52v5h-52z" fill="#16307a"/><path d="M320 0h105v5H320z" fill="#2c1440"/><path d="M465 0h20v5h-20z" fill="#f030f0"/><path d="M485 0h8v5h-8z" fill="#4a90f0"/><path d="M553 0h28v5h-28z" fill="#6a3826"/>
          <path d="M712 0h30v5h-30zM778 0h24v5h-24zM826 0h14v5h-14zM1064 0h16v5h-16zM1401 0h14v5h-14zM1476 0h13v5h-13zM1627 0h15v5h-15z" fill="#e032c8"/>
          <path d="M1222 0h22v5h-22z" fill="#46c4c0"/><path d="M1120 0h50v5h-50zM1256 0h60v5h-60z" fill="#182c50"/>
          <path d="M2140 0h120v3h-120z" fill="#3a3050"/>
          <path d="M634 80h8l-4 60h-4zM634 640h8v100h-8z" fill="#7a2070"/><path d="M634 930h8v490h-8z" fill="#2a8080"/>
          <path d="M1696 90h8v60h-8zM1696 500h8v40h-8zM1696 860h8v470h-8z" fill="#8a3a90"/>
          <path d="M659 1505h71v20h-71z" fill="#08181c"/><path d="M730 1505h72v20h-72z" fill="#1a4684"/><path d="M802 1505h78v20h-78z" fill="#0a1656"/><path d="M880 1505h75v20h-75z" fill="#20407c"/><path d="M955 1505h61v20h-61z" fill="#142c58"/>
          <path d="M836 1525 866 1512v6l-14 7z" fill="#1840b0"/>
          <path d="M1057 1505h32v20h-32z" fill="url(#neon)"/>
          <path d="M1304 1525 1332 1505h18l-26 20z" fill="#c848c8"/><path d="M1386 1525 1402 1505h16l-16 20z" fill="#7a1040"/><path d="M1730 1505 1742 1525" stroke="#6030b0" stroke-width="2"/>
          <path d="M1770 1505h14l16 20h-14z" fill="#d050c8"/><path d="M2060 1525 2080 1505h16l-16 20zM2134 1525 2146 1505h14l-12 20z" fill="#b040a8"/>
          <path d="M32 1525 36 1508h8l-4 17zM436 1525 440 1508h6l-4 17zM448 1525 452 1508h5l-4 17zM580 1525 584 1508h5l-4 17z" fill="#26262c"/>
          <path d="M2548 60h12v1200h-12z" fill="#0c0210"/>
        </svg>
        <window-frame class="hw" heading="CPUID HWMonitor">
          <svg slot="icon" class="logo" width="24" height="24" viewBox="0 0 24 24" aria-hidden="true"><rect width="24" height="24" fill="#a80c0c"/><path d="M0 12h24v12H0z" fill="#8c0606"/><path d="M13.500 3 7 13h4l-1.500 8L17 10.500h-4.500Z" fill="#fff"/></svg>
          <hw-monitor></hw-monitor>
        </window-frame>
        <window-frame class="aida" heading="System Stability Test - AIDA64" active>
          <svg slot="icon" class="logo" width="24" height="24" viewBox="0 0 24 24" aria-hidden="true"><path d="M5 9C6 11 7 12 8 13 9 9 8 5 7 2 10 5 11 8 12 11 13 8 13 4 12 1 15 4 16 8 16.500 12 18 10 18.500 8 18.500 6 21 10 21 16 18 20 16 23 13 24 10 24 5 24 2 20 1.500 16 3 17 4 18 5 18.500 3.500 15 4 12 5 9Z" fill="#ff9a1e"/><path d="M7 21C5.500 18 8 16 8.500 13 10.500 14 11 15 11.500 17 13 15 13.500 13 13.500 11 16 14 17 17 14 21 12 23.500 8.500 23 7 21Z" fill="#ffdc50"/><path d="M13 6C14 9 14 13 12 15 11 11 12 8 13 6Z" fill="#f0501a"/></svg>
          <aida-stability></aida-stability>
        </window-frame>
        <window-frame class="msi" heading="MSI Afterburner v4.6.5 Beta 4 hardware monitor" fixed>
          <svg slot="icon" class="logo" width="24" height="24" viewBox="0 0 24 24" aria-hidden="true"><path d="M1 1 4 3 11 9 14 9 16 11 23 4 21 10 23 14 19 16 19 22 16 18 12 23 10 17 9 13 4 8Z" fill="#b0b0b0"/><path d="M1 1 5 8 9 13 11 22M1 1 11 9M16 11 13 15 18 16M22 5 15 12" fill="none" stroke="#6a6a6a" stroke-width="1.200"/><path d="M11 11 14 10 12 14Z" fill="#ededed"/></svg>
          <msi-monitor></msi-monitor>
        </window-frame>
      </main>`;
  }
}
